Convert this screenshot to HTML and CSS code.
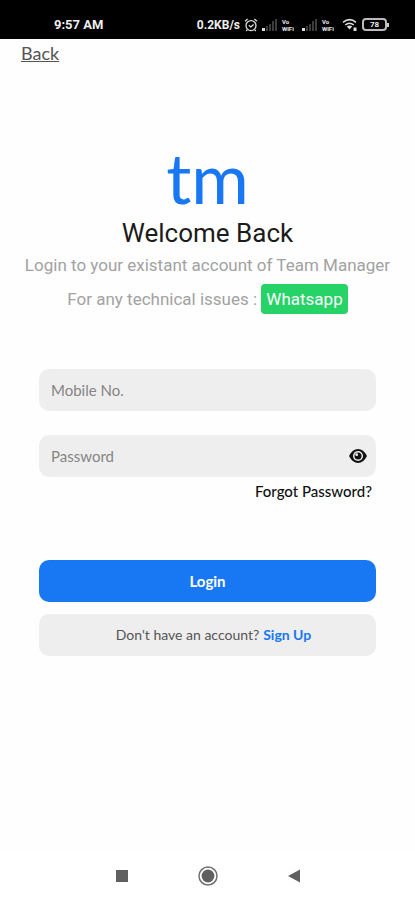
FILE: index.html
```html
<!DOCTYPE html>
<html lang="en">
<head>
<meta charset="utf-8">
<meta name="viewport" content="width=device-width, initial-scale=1">
<title>Team Manager – Login</title>
<link rel="stylesheet" href="styles.css">
</head>
<body>
<header class="status">
  <span class="clock">9:57 AM</span>
  <div class="indicators">
    <span class="rate">0.2KB/s</span>
    <svg class="alarm" viewBox="0 0 14 14" aria-hidden="true"><circle cx="7" cy="7.6" r="5"/><path d="M1 3.2 3.6 1M13 3.2 10.4 1M4.8 7.2l2 1.8 2.8-2.4M3.4 11.6 2.2 13M10.6 11.6l1.2 1.4"/></svg>
    <svg class="signal" viewBox="0 0 16 13" aria-hidden="true"><path class="on" d="M0 10h3v3H0z"/><path d="M4 8h2v5H4zM7 6h2v7H7zM10 3h2v10h-2zM13 1h2v12h-2z"/></svg>
    <span class="vowifi"><span>Vo</span><span>WiFi</span></span>
    <svg class="signal" viewBox="0 0 16 13" aria-hidden="true"><path class="on" d="M0 10h3v3H0z"/><path d="M4 8h2v5H4zM7 6h2v7H7zM10 3h2v10h-2zM13 1h2v12h-2z"/></svg>
    <span class="vowifi"><span>Vo</span><span>WiFi</span></span>
    <svg class="wifi" viewBox="0 0 16 13" aria-hidden="true"><path d="M1 4.4Q7.5-1 14 4.4M3.2 7Q7.5 3.5 11.8 7"/><path class="dot" d="M4.8 8.5Q7.5 6.3 10.2 8.5L7.5 11.5zM11.5 9.5h3V13h-3z"/></svg>
    <span class="battery"><span class="level">78</span></span>
  </div>
</header>
<main>
  <a class="back" href="#">Back</a>
  <section class="intro">
    <div class="logo">tm</div>
    <h1>Welcome Back</h1>
    <p class="lead">Login to your existant account of Team Manager</p>
    <p class="support">For any technical issues : <a class="whatsapp" href="#">Whatsapp</a></p>
  </section>
  <form class="login">
    <input class="box field" type="tel" placeholder="Mobile No." aria-label="Mobile No.">
    <div class="box password">
      <input class="field" type="password" placeholder="Password" aria-label="Password">
      <button class="reveal" type="button" aria-label="Show password">
        <svg viewBox="0 0 18 14" aria-hidden="true"><path d="M0 7Q3.5 0 9 0t9 7q-3.500 7-9 7T0 7z"/><circle class="ring" cx="9" cy="7" r="5"/><circle cx="9" cy="7" r="3.500"/><circle class="ring" cx="7.700" cy="5.700" r="1.400"/></svg>
      </button>
    </div>
    <a class="forgot" href="#">Forgot Password?</a>
    <button class="box submit" type="submit">Login</button>
    <div class="box signup">Don't have an account? <a href="#">Sign Up</a></div>
  </form>
</main>
<nav class="system">
  <button type="button" aria-label="Recent apps"><svg viewBox="0 0 20 20"><path d="M4 4h12v12H4z"/></svg></button>
  <button type="button" aria-label="Home"><svg viewBox="0 0 20 20"><circle class="outline" cx="10" cy="10" r="9"/><circle cx="10" cy="10" r="6.400"/></svg></button>
  <button type="button" aria-label="Back"><svg viewBox="0 0 20 20"><path d="M4 10 16 3.500v13z"/></svg></button>
</nav>
</body>
</html>
```
FILE: styles.css
```css
* { box-sizing: border-box; }

body {
  margin: 0;
  min-height: 100vh;
  display: flex;
  flex-direction: column;
  background: #fefefe;
  color: #1c1c1c;
  font-family: Lato, sans-serif;
  font-size: 15px;
  line-height: 20px;
}

button, input { font: inherit; border: 0; padding: 0; }
button { cursor: pointer; }
svg { display: block; }

.status {
  display: flex;
  justify-content: space-between;
  align-items: center;
  height: 39px;
  padding: 10px 26px 0 54px;
  background: #000;
  color: #eee;
  font: 700 12px/16px Roboto, sans-serif;
}
.clock { font-size: 13px; }
.indicators { display: flex; align-items: center; gap: 4px; }
.alarm { width: 14px; height: 14px; fill: none; stroke: #ddd; stroke-width: 1.3; }
.signal { width: 16px; height: 13px; fill: #3c3c3c; }
.signal .on { fill: #ddd; }
.vowifi {
  display: flex;
  flex-direction: column;
  width: 16px;
  font-size: 6px;
  line-height: 7px;
}
.wifi { width: 16px; height: 13px; fill: none; stroke: #ddd; stroke-width: 1.6; }
.wifi .dot { fill: #ddd; stroke: none; }
.battery { display: flex; align-items: center; }
.battery::after { content: ""; width: 2px; height: 4px; background: #ccc; }
.level {
  width: 25px;
  border: 2px solid #bbb;
  border-radius: 4px;
  font-size: 8px;
  line-height: 9px;
  text-align: center;
}

main { flex: 1; }
.back {
  display: block;
  width: fit-content;
  margin: 2px 21px 0;
  color: #555;
  font-size: 18px;
  line-height: 24px;
}

.intro {
  margin-top: 76px;
  text-align: center;
  font-family: Roboto, sans-serif;
}
.logo {
  margin-bottom: 4px;
  color: #1877f2;
  font: 400 70px/72px Lato, sans-serif;
}
h1 { margin: 0; font-size: 26px; line-height: 32px; font-weight: 400; }
p { margin: 0; color: #a2a2a2; font-size: 17px; }
.lead { line-height: 32px; }
.support { line-height: 36px; }
.whatsapp {
  display: inline-block;
  padding: 0 5px;
  border-radius: 4px;
  background: #25d366;
  color: #fff;
  line-height: 30px;
  text-decoration: none;
}

.login {
  display: flex;
  flex-direction: column;
  padding: 52px 39px 0;
}
.box {
  width: 100%;
  height: 42px;
  border-radius: 10px;
  background: #eee;
}
.field {
  min-width: 0;
  padding: 0 12px;
  color: #333;
}
.field::placeholder { color: #858585; opacity: 1; }
.password { display: flex; align-items: center; margin-top: 24px; }
.password .field { flex: 1; height: 100%; background: none; }
.reveal { padding: 4px 9px; background: none; }
.reveal svg { width: 18px; height: 14px; fill: #111; }
.reveal .ring { fill: #eee; }
.forgot {
  align-self: flex-end;
  margin: 4px 4px 0;
  color: #111;
  font-weight: 500;
  text-decoration: none;
}
.submit { margin-top: 59px; background: #1877f2; color: #fff; font-weight: 700; }
.signup {
  display: flex;
  align-items: center;
  justify-content: center;
  gap: 4px;
  margin-top: 12px;
  padding-left: 12px;
  color: #555;
  font-size: 14px;
}
.signup a { color: #1877f2; font-weight: 700; text-decoration: none; }

.system {
  display: flex;
  justify-content: center;
  gap: 66px;
  padding: 14px 0;
  background: #fff;
}
.system button { background: none; }
.system svg { width: 20px; height: 20px; fill: #606060; }
.system .outline { fill: none; stroke: #707070; stroke-width: 1.500; }
```
